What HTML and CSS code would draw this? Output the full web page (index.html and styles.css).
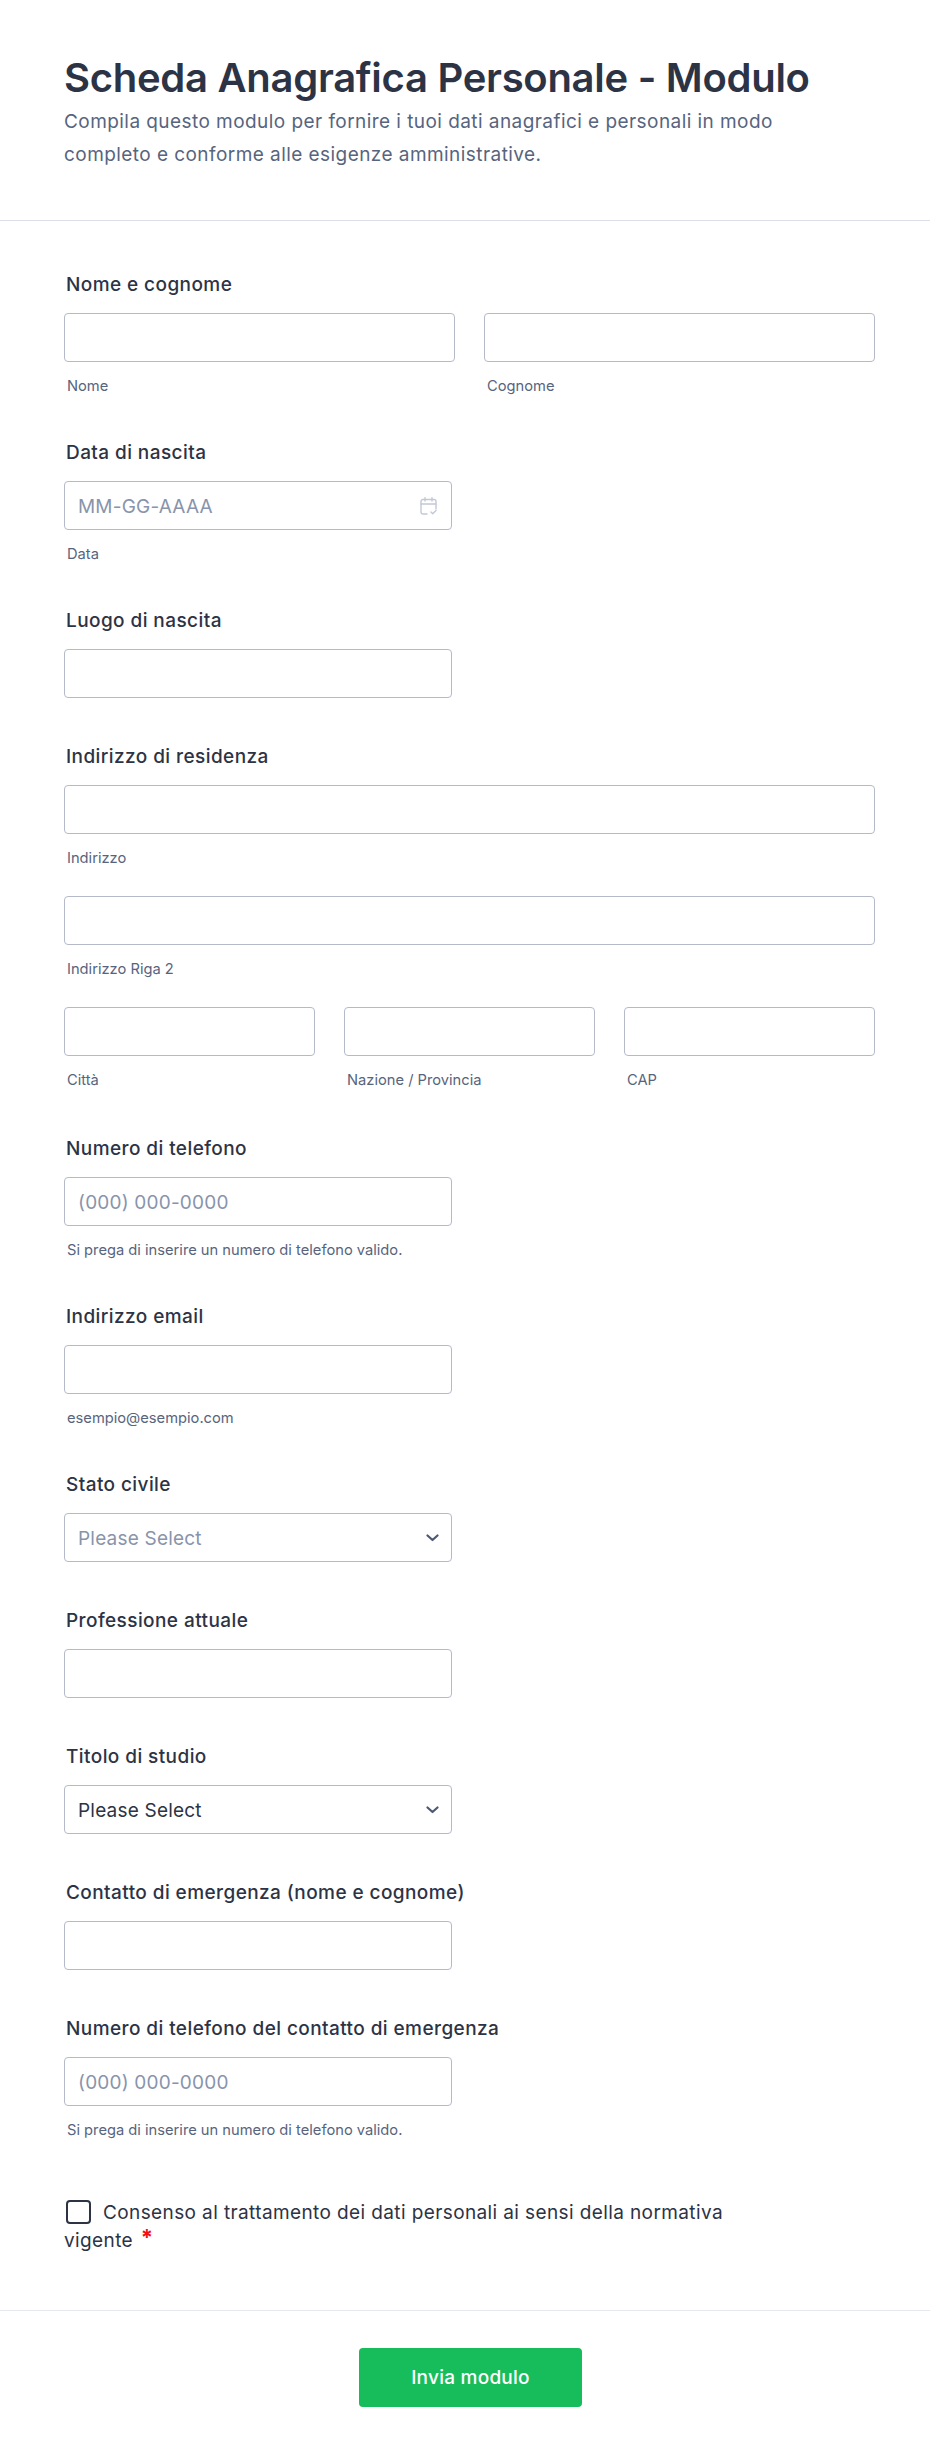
FILE: index.html
```html
<!DOCTYPE html>
<html lang="it">
<head>
    <meta charset="UTF-8">
    <meta name="viewport" content="width=device-width, initial-scale=1.0">
    <title>Scheda Anagrafica Personale - Modulo</title>
    <link rel="stylesheet" href="styles.css">
</head>
<body>
    <form class="form-page">
        <header class="form-header">
            <h1 class="form-title">Scheda Anagrafica Personale - Modulo</h1>
            <p class="form-subtitle">Compila questo modulo per fornire i tuoi dati anagrafici e personali in modo completo e conforme alle esigenze amministrative.</p>
        </header>

        <div class="form-body">
            <!-- Nome -->
            <div class="field">
                <label class="field-label">Nome e cognome</label>
                <div class="row row-two">
                    <div>
                        <input class="text-input" type="text">
                        <span class="sublabel">Nome</span>
                    </div>
                    <div>
                        <input class="text-input" type="text">
                        <span class="sublabel">Cognome</span>
                    </div>
                </div>
            </div>

            <div class="field">
                <label class="field-label">Data di nascita</label>
                <div class="input-wrap">
                    <input class="text-input" type="text" placeholder="MM-GG-AAAA">
                    <svg class="date-icon" width="17" height="18" viewBox="0 0 17 18" fill="none" stroke="#c3c8d6" stroke-width="1.4" stroke-linecap="round" stroke-linejoin="round">
                        <path d="M7 17H3a2 2 0 0 1-2-2V4.500a2 2 0 0 1 2-2h11a2 2 0 0 1 2 2V12"/>
                        <path d="M1 7h15M5 .7V4M12 .7V4"/>
                        <path d="M11 15l1.700 1.700L16 13.500"/>
                    </svg>
                </div>
                <span class="sublabel">Data</span>
            </div>

            <div class="field">
                <label class="field-label">Luogo di nascita</label>
                <input class="text-input narrow" type="text">
            </div>

            <!-- Indirizzo -->
            <div class="field field-address">
                <label class="field-label">Indirizzo di residenza</label>
                <div class="address-line">
                    <input class="text-input" type="text">
                    <span class="sublabel">Indirizzo</span>
                </div>
                <div class="address-line">
                    <input class="text-input" type="text">
                    <span class="sublabel">Indirizzo Riga 2</span>
                </div>
                <div class="row row-three">
                    <div>
                        <input class="text-input" type="text">
                        <span class="sublabel">Città</span>
                    </div>
                    <div>
                        <input class="text-input" type="text">
                        <span class="sublabel">Nazione / Provincia</span>
                    </div>
                    <div>
                        <input class="text-input" type="text">
                        <span class="sublabel">CAP</span>
                    </div>
                </div>
            </div>

            <div class="field">
                <label class="field-label">Numero di telefono</label>
                <input class="text-input narrow" type="text" placeholder="(000) 000-0000">
                <span class="sublabel">Si prega di inserire un numero di telefono valido.</span>
            </div>

            <div class="field">
                <label class="field-label">Indirizzo email</label>
                <input class="text-input narrow" type="text">
                <span class="sublabel">esempio@esempio.com</span>
            </div>

            <div class="field">
                <label class="field-label">Stato civile</label>
                <div class="input-wrap">
                    <div class="select-box is-empty">Please Select</div>
                    <svg class="select-arrow" width="13" height="8" viewBox="0 0 13 8" fill="none" stroke="#4f5873" stroke-width="2.2" stroke-linecap="round" stroke-linejoin="round">
                        <path d="M1.500 1.500L6.500 6l5-4.500"/>
                    </svg>
                </div>
            </div>

            <div class="field">
                <label class="field-label">Professione attuale</label>
                <input class="text-input narrow" type="text">
            </div>

            <div class="field">
                <label class="field-label">Titolo di studio</label>
                <div class="input-wrap">
                    <div class="select-box">Please Select</div>
                    <svg class="select-arrow" width="13" height="8" viewBox="0 0 13 8" fill="none" stroke="#4f5873" stroke-width="2.2" stroke-linecap="round" stroke-linejoin="round">
                        <path d="M1.500 1.500L6.500 6l5-4.500"/>
                    </svg>
                </div>
            </div>

            <div class="field">
                <label class="field-label">Contatto di emergenza (nome e cognome)</label>
                <input class="text-input narrow" type="text">
            </div>

            <div class="field">
                <label class="field-label">Numero di telefono del contatto di emergenza</label>
                <input class="text-input narrow" type="text" placeholder="(000) 000-0000">
                <span class="sublabel">Si prega di inserire un numero di telefono valido.</span>
            </div>

            <div class="consent">
                <span class="checkbox"></span>Consenso al trattamento dei dati personali ai sensi della normativa<br>vigente <span class="required">*</span>
            </div>
        </div>

        <footer class="form-footer">
            <button class="submit-btn" type="button">Invia modulo</button>
        </footer>
    </form>
</body>
</html>
```

FILE: styles.css
```css
* {
    box-sizing: border-box;
}

body {
    margin: 0;
    background: #fff;
    font-family: Inter, "Noto Sans", Arial, sans-serif;
    color: #2c3345;
}

.form-header {
    padding: 52px 64px 49px;
    border-bottom: 1px solid #dcdee8;
}

.form-title {
    margin: 0;
    font-size: 40px;
    line-height: 52px;
    font-weight: 600;
    letter-spacing: -0.28px;
    color: #2c3345;
}

.form-subtitle {
    margin: 0;
    max-width: 760px;
    padding-top: 1px;
    font-size: 19px;
    line-height: 33px;
    letter-spacing: 0.44px;
    color: #57647e;
}

.form-body {
    padding: 50px 55px 0 64px;
}

.field {
    margin-bottom: 45px;
}

.field-address {
    margin-bottom: 47px;
}

.field-label {
    display: block;
    margin: 0 0 16px 2px;
    padding-top: 2px;
    font-size: 19px;
    line-height: 24px;
    font-weight: 500;
    letter-spacing: 0.42px;
    color: #2c3345;
}

.text-input,
.select-box {
    display: block;
    width: 100%;
    height: 49px;
    padding: 2px 13px 0;
    border: 1px solid #b5bac9;
    border-radius: 4px;
    background: #fff;
    font-family: inherit;
    font-size: 19px;
    letter-spacing: 0.2px;
    color: #2c3345;
}

.text-input::placeholder {
    color: #8894ab;
}

.narrow,
.input-wrap {
    width: 388px;
}

.input-wrap {
    position: relative;
}

.select-box {
    padding-top: 0;
    line-height: 49px;
}

.select-box.is-empty {
    color: #8894ab;
}

.date-icon {
    position: absolute;
    top: 16px;
    right: 15px;
}

.select-arrow {
    position: absolute;
    top: 21px;
    right: 13px;
}

.sublabel {
    display: block;
    margin: 15px 0 -1px 3px;
    font-size: 14.7px;
    line-height: 18px;
    color: #57647e;
}

.row {
    display: grid;
}

.row-two {
    grid-template-columns: 1fr 1fr;
    column-gap: 29px;
}

.row-three {
    grid-template-columns: 1fr 1fr 1fr;
    column-gap: 29px;
}

.address-line {
    margin-bottom: 30px;
}

.consent {
    margin-top: 61px;
    padding-bottom: 55px;
    font-size: 19px;
    line-height: 28px;
    letter-spacing: 0.39px;
    color: #2c3345;
}

.checkbox {
    display: inline-block;
    width: 25px;
    height: 24px;
    margin: 0 12px 0 2px;
    border: 2px solid #2c3345;
    border-radius: 4px;
    vertical-align: -5px;
}

.required {
    margin-left: 2px;
    font-size: 22px;
    line-height: 0;
    vertical-align: 2px;
    color: #f50f0f;
    font-weight: 700;
}

.form-footer {
    display: flex;
    justify-content: center;
    padding: 37px 0 50px 11px;
    border-top: 1px solid #e6e8ef;
}

.submit-btn {
    width: 223px;
    height: 59px;
    border: 0;
    border-radius: 4px;
    background: #18bd5b;
    font-family: inherit;
    font-size: 19px;
    font-weight: 500;
    letter-spacing: 0.25px;
    color: #fff;
}
```
